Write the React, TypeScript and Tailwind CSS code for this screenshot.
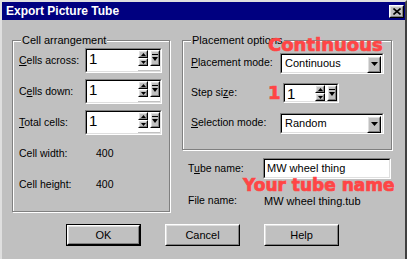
const ui = { fontFamily: '"Liberation Sans", Arial, sans-serif' };
const big = { fontFamily: '"DejaVu Sans", "Liberation Sans", sans-serif' };

const Raised = ({ className = "", children }: { className?: string; children?: React.ReactNode }) => (
  <div className={"border border-t-white border-l-white border-b-black border-r-black bg-[#c0c0c0] " + className}>
    <div className="w-full h-full border border-t-[#dfdfdf] border-l-[#dfdfdf] border-b-[#808080] border-r-[#808080] flex items-center justify-center">
      {children}
    </div>
  </div>
);

const Sunken = ({ className = "", children }: { className?: string; children?: React.ReactNode }) => (
  <div className={"border border-t-[#808080] border-l-[#808080] border-b-white border-r-white " + className}>
    <div className="w-full h-full border border-t-black border-l-black border-b-[#dfdfdf] border-r-[#dfdfdf] bg-white flex">
      {children}
    </div>
  </div>
);

const Arrow = () => (
  <svg width="7" height="4" viewBox="0 0 7 4">
    <path d="M0 0 L7 0 L3.5 4 Z" fill="black" />
  </svg>
);

const Spin = ({ className = "" }: { className?: string }) => (
  <Sunken className={className}>
    <div className="flex-1 pl-[2px] text-[15px] leading-[17px]">1</div>
    <div className="flex flex-col">
      <div className="flex gap-[2px]">
        <div className="flex flex-col">
          <Raised className="w-[10px] h-[8px]">
            <svg width="5" height="3" viewBox="0 0 5 3"><path d="M2.5 0 L5 3 L0 3 Z" fill="black" /></svg>
          </Raised>
          <Raised className="w-[10px] h-[8px]">
            <svg width="5" height="3" viewBox="0 0 5 3"><path d="M0 0 L5 0 L2.5 3 Z" fill="black" /></svg>
          </Raised>
        </div>
        <Raised className="w-[10px] h-[16px]">
          <svg width="6" height="8" viewBox="0 0 6 8">
            <rect x="0" y="0" width="6" height="1" fill="black" />
            <path d="M0 3 L6 3 L3 7 Z" fill="black" />
          </svg>
        </Raised>
      </div>
      <div className="flex-1 border-b border-[#c0c0c0]" />
    </div>
  </Sunken>
);

const Select = ({ value, className = "" }: { value: string; className?: string }) => (
  <Sunken className={className}>
    <div className="flex-1 pl-[3px] leading-[17px] text-[11px]">{value}</div>
    <Raised className="w-[14px] h-[17px] m-[1px]">
      <Arrow />
    </Raised>
  </Sunken>
);

const Group = ({ label, className = "", children }: { label: string; className?: string; children?: React.ReactNode }) => (
  <div className={"relative border border-[#808080] shadow-[inset_1px_1px_0_white,1px_1px_0_white] " + className}>
    <span className="absolute -top-[8px] left-[8px] px-[1px] bg-[#c0c0c0] leading-[14px] text-[11px]">{label}</span>
    {children}
  </div>
);

const red = "absolute font-bold text-[#ff4545] leading-[22px] [-webkit-text-stroke:0.7px_#ff4545]";

export default function App() {
  return (
    <div
      style={ui}
      className="w-[407px] h-[259px] bg-[#c0c0c0] text-black text-[10.5px] whitespace-nowrap border-l-2 border-t-2 border-r-2 border-l-[#dfdfdf] border-t-[#dfdfdf] border-r-[#404040] overflow-hidden relative"
    >
      <div className="h-[18px] bg-[#000080] flex items-center justify-between pl-[4px] pr-[1px]">
        <span className="text-white font-bold text-[12px]">Export Picture Tube</span>
        <Raised className="w-[15px] h-[13px]">
          <svg width="8" height="7" viewBox="0 0 8 7">
            <path d="M0.5 0.5 L7.5 6.5 M7.5 0.5 L0.5 6.5" stroke="black" strokeWidth="1.6" />
          </svg>
        </Raised>
      </div>

      <div className="flex gap-[12px] pl-[10px] mt-[20px]">
        <Group label="Cell arrangement" className="w-[158px] h-[172px] pt-[7px] pl-[6px] flex flex-col gap-[6px]">
          <div className="flex items-center h-[25px]">
            <span className="w-[66px]"><u>C</u>ells across:</span>
            <Spin className="w-[77px] h-[25px]" />
          </div>
          <div className="flex items-center h-[25px]">
            <span className="w-[66px]">C<u>e</u>lls down:</span>
            <Spin className="w-[77px] h-[25px]" />
          </div>
          <div className="flex items-center h-[25px]">
            <span className="w-[66px]"><u>T</u>otal cells:</span>
            <Spin className="w-[77px] h-[25px]" />
          </div>
          <div className="flex items-center h-[25px]">
            <span className="w-[77px]">Cell width:</span>
            <span>400</span>
          </div>
          <div className="flex items-center h-[25px]">
            <span className="w-[77px]">Cell height:</span>
            <span>400</span>
          </div>
        </Group>

        <div className="flex flex-col w-[210px]">
          <Group label="Placement options" className="h-[110px] pt-[11px] pl-[8px] flex flex-col gap-[8px]">
            <div className="flex items-center h-[22px]">
              <span className="w-[89px]"><u>P</u>lacement mode:</span>
              <Select value="Continuous" className="w-[104px] h-[21px]" />
            </div>
            <div className="flex items-center h-[22px]">
              <span className="w-[92px]">Step si<u>z</u>e:</span>
              <Spin className="w-[56px] h-[20px]" />
            </div>
            <div className="flex items-center h-[22px]">
              <span className="w-[89px]"><u>S</u>election mode:</span>
              <Select value="Random" className="w-[104px] h-[21px]" />
            </div>
          </Group>
          <div className="flex items-center mt-[8px] pl-[6px]">
            <span className="w-[75px]">T<u>u</u>be name:</span>
            <Sunken className="w-[128px] h-[21px]">
              <div className="pl-[2px] leading-[17px] text-[11px]">MW wheel thing</div>
            </Sunken>
          </div>
          <div className="flex items-center mt-[14px] pl-[6px]">
            <span className="w-[76px]">File name:</span>
            <span className="text-[11px]">MW wheel thing.tub</span>
          </div>
        </div>
      </div>

      <div className="flex justify-center gap-[24px] mt-[12px] pr-[2px] text-[11px]">
        <div className="border border-black">
          <Raised className="w-[73px] h-[20px]">OK</Raised>
        </div>
        <Raised className="w-[75px] h-[22px]">Cancel</Raised>
        <Raised className="w-[75px] h-[22px]">Help</Raised>
      </div>

      <span style={big} className={red + " left-[266px] top-[32px] text-[18px]"}>Continuous</span>
      <span style={big} className={red + " left-[266px] top-[80px] text-[18px]"}>1</span>
      <span style={big} className={red + " left-[241px] top-[172px] text-[17px]"}>Your tube name</span>
    </div>
  );
}
